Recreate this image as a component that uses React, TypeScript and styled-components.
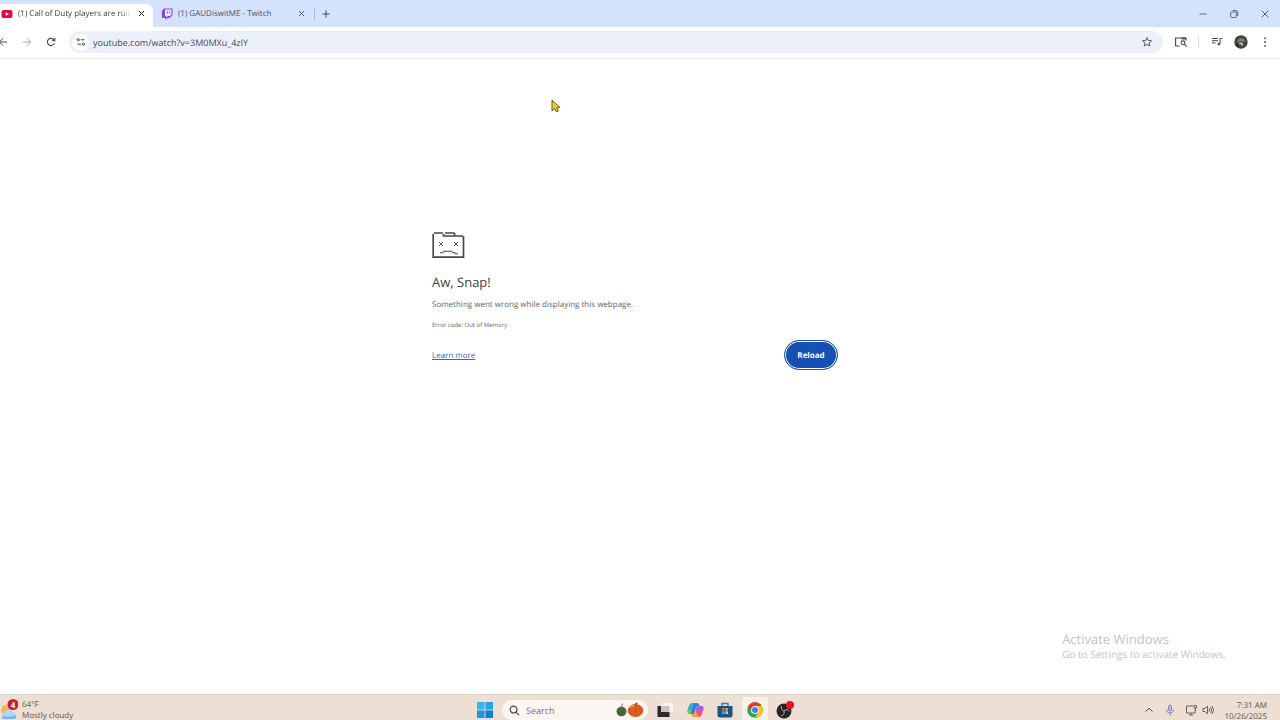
import React from "react";
import styled, { createGlobalStyle } from "styled-components";

const GlobalStyle = createGlobalStyle`
  * { box-sizing: border-box; }
  body { margin: 0; background: #fff; overflow: hidden; font-family: "Open Sans", "Noto Sans", sans-serif; text-rendering: geometricPrecision; }
  button { border: 0; padding: 0; background: none; font: inherit; color: inherit; cursor: pointer; }
  input, button { text-rendering: inherit; }
  svg { display: block; flex: none; }
`;

const Desktop = styled.div`
  position: relative;
  min-height: 100vh;
  display: flex;
  flex-direction: column;
  color: #474747;
`;

const TabStrip = styled.div`
  display: flex;
  align-items: stretch;
  height: 27px;
  background: #d3e3fd;
`;

const Tab = styled.div<{ $active?: boolean }>`
  display: flex;
  align-items: center;
  gap: 5px;
  width: ${(p) => (p.$active ? 153 : 161)}px;
  margin-top: ${(p) => (p.$active ? 4 : 0)}px;
  padding: ${(p) => (p.$active ? "0 7px 4px 1px" : "0 8px 0 8px")};
  background: ${(p) => (p.$active ? "#fff" : "transparent")};
  border-radius: 0 7px 0 0;
  color: ${(p) => (p.$active ? "#3c3c42" : "#4a5266")};
`;

const TabTitle = styled.span<{ $fade?: boolean }>`
  flex: 1;
  overflow: hidden;
  white-space: nowrap;
  padding-top: 1px;
  font-size: 8px;
  line-height: 12px;
  ${(p) => p.$fade && "mask-image: linear-gradient(90deg, #000 90%, transparent);"}
`;

const TabClose = styled.button`
  display: grid;
  place-items: center;
  width: 10px;
  height: 12px;
`;

const Divider = styled.span<{ $color: string }>`
  width: 1px;
  height: 12px;
  align-self: center;
  background: ${(p) => p.$color};
`;

const Cell = styled.button<{ $w?: number }>`
  display: grid;
  place-items: center;
  align-self: center;
  width: ${(p) => p.$w ?? 24}px;
  height: 24px;
`;

const StripEnd = styled.div`
  display: flex;
  align-items: center;
  margin-left: auto;
  color: #3f4a60;
`;

const Toolbar = styled.div`
  display: flex;
  align-items: center;
  height: 32px;
  padding: 0 3px 1px 0;
  background: #fff;
  border-bottom: 1px solid #e8eaed;
`;

const Nav = styled.div`
  display: flex;
  margin: 0 6px 0 -9px;
`;

const Omnibox = styled.form`
  flex: 1;
  display: flex;
  align-items: center;
  height: 22px;
  padding: 0 4px 0 3px;
  margin-right: 6px;
  border-radius: 11px;
  background: #ecf0fa;
`;

const SiteInfo = styled.button`
  display: grid;
  place-items: center;
  width: 17px;
  height: 17px;
  margin-right: 4px;
  border-radius: 50%;
  background: #fff;
`;

const Address = styled.input`
  flex: 1;
  border: 0;
  padding: 2px 0 0;
  outline: 0;
  background: transparent;
  color: #46484d;
  font: 9px/14px "Open Sans", "Noto Sans", sans-serif;
`;

const Tools = styled.div`
  display: flex;
  ${Divider} { margin: 0 6px 0 5px; }
`;

const Page = styled.main`
  flex: 1;
  padding: 172px 10px 0 0;
`;

const CrashPanel = styled.section`
  width: 406px;
  max-width: 100%;
  margin: 0 auto;
`;

const Heading = styled.h1`
  margin: 13px 0 0;
  font-size: 13px;
  line-height: 20px;
  font-weight: 400;
  color: #3f4043;
`;

const Message = styled.p`
  margin: 7px 0 0;
  font-size: 8px;
  line-height: 12px;
  color: #626469;
`;

const ErrorCode = styled.p`
  margin: 9px 0 0;
  font-size: 6px;
  line-height: 11px;
  color: #626469;
`;

const Actions = styled.div`
  display: flex;
  align-items: center;
  justify-content: space-between;
  margin-top: 9px;
`;

const LearnMore = styled.a`
  padding-top: 2px;
  font-size: 8px;
  line-height: 12px;
  color: #4a5fae;
`;

const Reload = styled.button`
  && {
    width: 54px;
    height: 30px;
    border: 1px solid #1a55b8;
    border-radius: 15px;
    background: #1650b5;
    box-shadow: inset 0 0 0 1px #fff;
    color: #fff;
    font-size: 8px;
    font-weight: 700;
  }
`;

const Watermark = styled.aside`
  position: absolute;
  right: 54px;
  bottom: 59px;
  color: #c3c3c3;
  font-size: 10px;
  line-height: 14px;
`;

const WatermarkTitle = styled.div`
  font-size: 13px;
  line-height: 16px;
`;

const Pointer = styled.svg`
  position: absolute;
  left: 551px;
  top: 99px;
`;

const Taskbar = styled.footer`
  display: grid;
  grid-template-columns: 1fr auto 1fr;
  align-items: start;
  height: 26px;
  padding-right: 3px;
  overflow: hidden;
  background: #eddfd3;
  border-top: 1px solid #dcd6cb;
`;

const Row = styled.div<{ $end?: boolean }>`
  display: flex;
  align-items: center;
  justify-content: ${(p) => (p.$end ? "flex-end" : "flex-start")};
  height: 30px;
`;

const Weather = styled.button`
  display: flex;
  align-items: center;
  gap: 4px;
  text-align: left;
  color: #5f5a56;
`;

const SmallLines = styled.span`
  display: block;
  font-size: 8px;
  line-height: 11px;
`;

const Search = styled.label`
  display: flex;
  align-items: center;
  gap: 6px;
  width: 146px;
  height: 20px;
  margin: 0 2px 0 9px;
  padding: 0 4px 0 7px;
  border-radius: 10px;
  background: #fbf6f2;
`;

const SearchInput = styled.input`
  flex: 1;
  min-width: 0;
  border: 0;
  padding: 2px 0 0;
  outline: 0;
  background: transparent;
  font: 9px/14px "Open Sans", "Noto Sans", sans-serif;
  &::placeholder { color: #77716d; opacity: 1; }
`;

const TaskButton = styled.button<{ $active?: boolean }>`
  display: grid;
  place-items: center;
  width: 26px;
  height: 26px;
  margin: 0 2px;
  border-radius: 3px;
  background: ${(p) => (p.$active ? "#f8f1eb" : "transparent")};
`;

const Clock = styled.time`
  width: 54px;
  margin: 0 10px 0 -1px;
  padding-top: 1px;
  text-align: right;
  color: #5a5552;
  font-size: 8px;
  line-height: 11px;
`;

type GlyphProps = { d: string; size?: number; sw?: number; color?: string; box?: number };
const Glyph = ({ d, size = 12, sw = 1, color = "currentColor", box = 12 }: GlyphProps) => (
  <svg width={size} height={size} viewBox={`0 0 ${box} ${box}`} fill="none" stroke={color} strokeWidth={sw}>
    <path d={d} />
  </svg>
);

const CLOSE = "M1 1 6 6M6 1 1 6";

export default function App() {
  return (
    <>
      <GlobalStyle />
      <Desktop>
        <TabStrip>
          <Tab $active>
            <svg width="12" height="10" viewBox="0 0 12 10">
              <rect x="0.5" y="1" width="11" height="8" rx="2" fill="#e5093c" />
              <path d="M4.7 3.2v3.6L8 5z" fill="#fff" />
            </svg>
            <TabTitle $fade>(1) Call of Duty players are ruin</TabTitle>
            <TabClose aria-label="Close tab"><Glyph d={CLOSE} size={7} box={7} color="#222" /></TabClose>
          </Tab>
          <Tab>
            <svg width="12" height="12" viewBox="0 0 12 12">
              <path d="M3 .5h8.500v6.500L8.500 10H6.500L4.500 11.800V10H1V3z" fill="#8a3ff0" />
              <path d="M4 1.500h6.500v5L9 8H7L5.300 9.500V8H4z" fill="#eee6ff" />
              <path d="M6.500 3.200v2.300M8.700 3.200v2.300" stroke="#8a3ff0" strokeWidth="0.8" />
            </svg>
            <TabTitle>(1) GAUDiswitME - Twitch</TabTitle>
            <TabClose aria-label="Close tab"><Glyph d={CLOSE} size={7} box={7} color="#3f4a60" sw={0.9} /></TabClose>
          </Tab>
          <Divider $color="#a9bddd" />
          <Cell $w={22} aria-label="New tab"><Glyph d="M4 .5v7M.5 4h7" size={8} box={8} color="#3f4a60" /></Cell>
          <StripEnd>
            <Cell $w={31} aria-label="Minimize"><Glyph d="M2.500 6h7" sw={0.8} /></Cell>
            <Cell $w={31} aria-label="Restore"><Glyph d="M3.500 4h4q.8 0 .8.8v4q0 .7-.8.7h-4q-.8 0-.8-.7v-4q0-.8.8-.8zM4.700 2.600h3.600q1.400 0 1.400 1.400v4" sw={0.8} /></Cell>
            <Cell $w={31} aria-label="Close"><Glyph d="M2.700 2.700l6.600 6.600M9.300 2.700l-6.600 6.600" sw={0.9} /></Cell>
          </StripEnd>
        </TabStrip>

        <Toolbar>
          <Nav>
            <Cell aria-label="Back"><Glyph d="M10 6H2.500M6 2.300 2.300 6 6 9.700" /></Cell>
            <Cell aria-label="Forward"><Glyph d="M2 6h7.500M6 2.300 9.700 6 6 9.700" color="#a6a8ab" /></Cell>
            <Cell aria-label="Reload page"><Glyph d="M9.400 7.100A3.600 3.600 0 1 1 9 4L9.700 4.800M9.800 1.800v3H6.800" sw={1.1} /></Cell>
          </Nav>
          <Omnibox onSubmit={(e) => e.preventDefault()}>
            <SiteInfo type="button" aria-label="Site information">
              <svg width="10" height="10" viewBox="0 0 10 10" fill="none" stroke="#46484d" strokeWidth="1">
                <circle cx="2.300" cy="2.800" r="1.100" /><path d="M4.800 2.800H8.500M1.500 7.200h3.700" /><circle cx="7.500" cy="7.200" r="1.100" />
              </svg>
            </SiteInfo>
            <Address aria-label="Address" defaultValue="youtube.com/watch?v=3M0MXu_4zIY" />
            <Cell type="button" aria-label="Bookmark this tab"><Glyph d="M6 1.600 7.300 4.500l3.200.3-2.400 2.100.7 3.100L6 8.400 3.200 10l.7-3.100L1.500 4.800l3.200-.3z" sw={0.9} /></Cell>
          </Omnibox>
          <Tools>
            <Cell aria-label="Search this page">
              <svg width="14" height="12" viewBox="0 0 14 12" fill="none" stroke="#46484d" strokeWidth="1.100">
                <path d="M5.500 10H1.600V2H12v2.500" /><path d="M7.500 2.500H12" strokeWidth="1.800" />
                <circle cx="9" cy="6.800" r="1.900" /><path d="M10.400 8.200 12.700 10.600" />
              </svg>
            </Cell>
            <Divider $color="#d5dded" />
            <Cell aria-label="Media controls">
              <svg width="12" height="12" viewBox="0 0 12 12" fill="none" stroke="#46484d" strokeWidth="1">
                <path d="M1 2.500h6M1 4.700h6M1 6.900h3.500M9 7.800V2.500h2.500" /><circle cx="7.800" cy="8" r="1.300" fill="#46484d" stroke="none" />
              </svg>
            </Cell>
            <Cell aria-label="Profile">
              <svg width="14" height="14" viewBox="0 0 14 14">
                <circle cx="7" cy="7" r="6.700" fill="#3d4438" />
                <path d="M3.500 5Q6 2 10 4L11.500 7 9 6.500Q6 5 3.500 8z" fill="#7c8672" />
                <path d="M5 7.500Q8 6 9.500 9.500L8 11.500Q7 9 5 9z" fill="#b9a39a" />
                <path d="M1.500 8Q4 9 5 12.500Q2 11.500 1.500 8z" fill="#1e241e" />
              </svg>
            </Cell>
            <Cell aria-label="Menu">
              <svg width="4" height="12" viewBox="0 0 4 12" fill="#46484d"><circle cx="2" cy="2.200" r="0.900" /><circle cx="2" cy="6" r="0.900" /><circle cx="2" cy="9.800" r="0.900" /></svg>
            </Cell>
          </Tools>
        </Toolbar>

        <Page>
          <CrashPanel>
            <svg width="33" height="28" viewBox="0 0 33 28" fill="none" stroke="#47484b" strokeWidth="1.700">
              <path d="M2 2H11M13 2H22.500M1.200 3V26.200H31.500V5M11.500 3V5H31M22.500 2V5" />
              <path d="M7 11l4 4M11 11l-4 4M22 11l4 4M26 11l-4 4" strokeWidth="0.900" />
              <path d="M8 21.700h3.500M11 20.300h9.500M20 21.700h3.500M23 22.800h3" strokeWidth="1.100" />
            </svg>
            <Heading>Aw, Snap!</Heading>
            <Message>Something went wrong while displaying this webpage.</Message>
            <ErrorCode>Error code: Out of Memory</ErrorCode>
            <Actions>
              <LearnMore href="#learn">Learn more</LearnMore>
              <Reload>Reload</Reload>
            </Actions>
          </CrashPanel>
        </Page>

        <Taskbar>
          <Row>
            <Weather>
              <svg width="18" height="22" viewBox="0 0 18 22">
                <circle cx="6" cy="11" r="5" fill="#f5b84a" />
                <path d="M4 20a4 4 0 0 1 0-7 5 5 0 0 1 9 0 3.600 3.600 0 0 1 0 7z" fill="#b5d4f6" />
                <path d="M3 20h11q3-1 2-4-6 3-14 1z" fill="#7fb0ea" />
                <circle cx="13" cy="5.500" r="5.500" fill="#c3202c" />
                <text x="13" y="8.500" textAnchor="middle" fontSize="8" fontWeight="700" fill="#fff">4</text>
              </svg>
              <SmallLines>64°F<br />Mostly cloudy</SmallLines>
            </Weather>
          </Row>
          <Row>
            <button aria-label="Start">
              <svg width="16" height="16" viewBox="0 0 16 16">
                <path d="M0 0h7.600v7.600H0z" fill="#39b4ee" /><path d="M8.400 0H16v7.600H8.400z" fill="#2aa1e6" />
                <path d="M0 8.400h7.600V16H0z" fill="#1f98e0" /><path d="M8.400 8.400H16V16H8.400z" fill="#0d80d2" />
              </svg>
            </button>
            <Search>
              <Glyph d="M5 1.300a3.700 3.700 0 1 1 0 7.400 3.700 3.700 0 0 1 0-7.400zM7.700 7.700 11 11" size={11} sw={1.3} color="#4a4643" />
              <SearchInput aria-label="Search" placeholder="Search" />
              <svg width="28" height="16" viewBox="0 0 28 16">
                <ellipse cx="5.500" cy="9.500" rx="5" ry="4.800" fill="#4d6a3f" /><path d="M5.500 5 6.300 1.500M3.500 6.500Q2 9 3.500 13M6 6Q8 9.500 6 13.500" stroke="#3a5432" strokeWidth="0.800" fill="none" />
                <ellipse cx="19.500" cy="8.500" rx="7.800" ry="6.500" fill="#e05c26" />
                <path d="M16 3.500Q12 8 16 14M19.500 4v10.500M23 3.500q4 4.500 0 10.500" stroke="#c74b1c" strokeWidth="0.600" fill="none" />
                <path d="M13.500 6Q16 3 19 4" stroke="#f49a61" strokeWidth="1.300" fill="none" /><path d="M19.500 4V2l2-.8" stroke="#59602c" strokeWidth="1.300" fill="none" />
              </svg>
            </Search>
            <TaskButton aria-label="Task view">
              <svg width="18" height="16" viewBox="0 0 18 16"><path d="M6 1h11v9H6z" fill="#f6f4f2" /><path d="M1.500 4H5v6h8.500v5h-12z" fill="#2d2928" /><path d="M5 4h8.500v6H5z" fill="#c9c4bf" /></svg>
            </TaskButton>
            <TaskButton aria-label="Copilot">
              <svg width="17" height="16" viewBox="0 0 17 16">
                <path d="M5.500 1H10q1.500 0 2 1.500l.5 1.500H10.500Q9.500 4 9 5.500L7.500 10.500Q7 12 5.500 12H3.500Q-.3 12 .8 8L2.200 3.500Q3 1 5.500 1z" fill="#2c7fe6" />
                <path d="M2.200 3.500Q3 1 5.500 1H8Q6.500 2 6 4L4 10Q3.500 12 2.500 12-.3 11 .8 8z" fill="#30b5c8" />
                <path d="M11.500 15H7q-1.500 0-2-1.500L4.500 12h2Q7.500 12 8 10.500L9.500 5.500Q10 4 11.500 4h2q3.800 0 2.700 4l-1.400 4.500Q14 15 11.500 15z" fill="#ea4f8e" />
                <path d="M4.500 12h2Q7.500 12 8 10.500l.4-1.400L12 15H7q-1.500 0-2-1.500z" fill="#f6a52e" />
                <path d="M9.500 5.500Q10 4 11.500 4h2q3.800 0 2.700 4l-.3 1L8.800 8z" fill="#a55ee4" />
                <path d="M1 8l3.800-.5L4 10Q3.500 12 2.500 12-.1 11 1 8z" fill="#76c75d" />
              </svg>
            </TaskButton>
            <TaskButton aria-label="Microsoft Store">
              <svg width="16" height="16" viewBox="0 0 16 16">
                <path d="M5 4V1.500h6V4" fill="none" stroke="#2687c8" strokeWidth="1.400" /><path d="M.5 4h15v9q0 2.500-2.500 2.500H3Q.5 15.500.5 13z" fill="#195487" />
                <path d="M5 6h2.700v2.700H5z" fill="#ee6043" /><path d="M8.300 6H11v2.700H8.300z" fill="#8bc23f" /><path d="M5 9.300h2.700V12H5z" fill="#38aceb" /><path d="M8.300 9.300H11V12H8.300z" fill="#f7c33b" />
              </svg>
            </TaskButton>
            <TaskButton $active aria-label="Chrome">
              <svg width="16" height="16" viewBox="0 0 16 16">
                <circle cx="8" cy="8" r="7.800" fill="#2da94f" />
                <path d="M1.250 4.100A7.800 7.800 0 0 1 14.750 4.100H8L4.600 10z" fill="#e33b2e" />
                <path d="M14.750 4.100A7.800 7.800 0 0 1 8 15.800L11.400 10 8 4.100z" fill="#fbc116" />
                <circle cx="8" cy="8" r="3.900" fill="#fff" /><circle cx="8" cy="8" r="3.050" fill="#4384ef" />
              </svg>
            </TaskButton>
            <TaskButton aria-label="OBS Studio">
              <svg width="20" height="20" viewBox="0 0 20 20">
                <circle cx="9" cy="11" r="7.500" fill="#252326" />
                <path d="M9 11Q5.500 10 6.500 6M9 11q3-3 5.500.5M9 11q1 4-3 5" fill="none" stroke="#aaa7aa" strokeWidth="1" />
                <circle cx="15" cy="5" r="4" fill="#e4151f" />
              </svg>
            </TaskButton>
          </Row>
          <Row $end>
            <Cell $w={20} aria-label="Show hidden icons"><Glyph d="M2.500 7.500 6 4.300l3.500 3.200" /></Cell>
            <Cell $w={22} aria-label="Microphone">
              <svg width="10" height="12" viewBox="0 0 10 12" fill="none" stroke="#8186b5"><rect x="3.500" y="1" width="3" height="6" rx="1.500" fill="#b4bae0" /><path d="M1.500 5.500Q1.500 9 5 9t3.500-3.500M5 9v2.500" /></svg>
            </Cell>
            <Cell $w={20} aria-label="Network">
              <svg width="13" height="12" viewBox="0 0 13 12" fill="none" stroke="#5a5552" strokeWidth="0.900"><path d="M8 2H1.500v7H10V6.500M4 11h4M6 9v2M9 1.500h2.500V4H9zM10.200 4v3" /></svg>
            </Cell>
            <Cell $w={13} aria-label="Volume">
              <svg width="12" height="12" viewBox="0 0 12 12" fill="none" stroke="#5a5552" strokeWidth="0.900"><path d="M1 4.500h2L5.500 2v8L3 7.500H1zM7 4.300q1.300 1.700 0 3.400M8.500 3q2.300 3 0 6M10 2q3 4 0 8" /></svg>
            </Cell>
            <Clock>7:31 AM<br />10/26/2025</Clock>
          </Row>
        </Taskbar>

        <Watermark>
          <WatermarkTitle>Activate Windows</WatermarkTitle>
          Go to Settings to activate Windows.
        </Watermark>
        <Pointer width="10" height="14" viewBox="0 0 10 14">
          <path d="M1 1v11l2.700-2.400L5.500 13l1.800-.9-1.500-3.200L9 8.500z" fill="#f2c91c" stroke="#5a4a20" strokeWidth="0.900" />
        </Pointer>
      </Desktop>
    </>
  );
}
